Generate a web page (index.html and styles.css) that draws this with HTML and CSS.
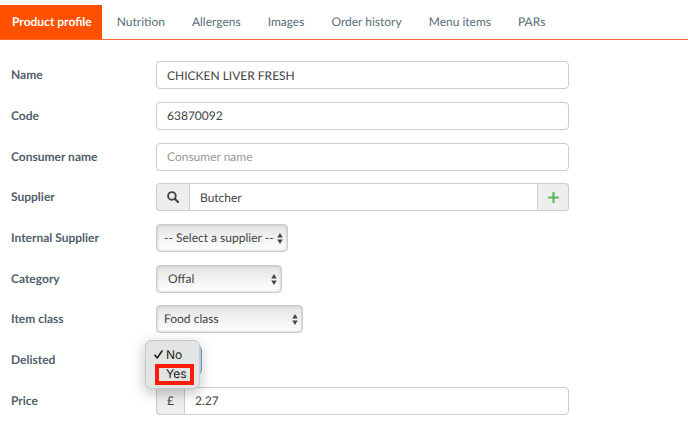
FILE: index.html
```html
<!DOCTYPE html>
<html lang="en">
<head>
<meta charset="utf-8">
<title>Product profile</title>
<link rel="stylesheet" href="styles.css">
</head>
<body>
<nav class="tabs">
  <a class="tab active" href="#profile">Product profile</a>
  <a class="tab" href="#nutrition">Nutrition</a>
  <a class="tab" href="#allergens">Allergens</a>
  <a class="tab" href="#images">Images</a>
  <a class="tab" href="#orders">Order history</a>
  <a class="tab" href="#menu">Menu items</a>
  <a class="tab" href="#pars">PARs</a>
</nav>
<form class="form">
  <div class="row">
    <label for="name">Name</label>
    <input class="control" id="name" type="text" value="CHICKEN LIVER FRESH">
  </div>
  <div class="row">
    <label for="code">Code</label>
    <input class="control" id="code" type="text" value="63870092">
  </div>
  <div class="row">
    <label for="consumer">Consumer name</label>
    <input class="control" id="consumer" type="text" placeholder="Consumer name">
  </div>
  <div class="row">
    <label for="supplier">Supplier</label>
    <div class="group">
      <span class="addon search">
        <svg width="12" height="12" viewBox="0 0 12 12" aria-hidden="true"><circle cx="4.9" cy="4.9" r="3.8" fill="none" stroke="#444" stroke-width="1.9"/><path d="M7.8 7.8 11 11" stroke="#444" stroke-width="2.2" stroke-linecap="round"/></svg>
      </span>
      <input class="control" id="supplier" type="text" value="Butcher">
      <button class="addon add" type="button" aria-label="Add supplier">
        <svg width="11" height="11" viewBox="0 0 11 11" aria-hidden="true"><path d="M5.5 1v9M1 5.5h9" stroke="#5cb85c" stroke-width="2.2" stroke-linecap="round"/></svg>
      </button>
    </div>
  </div>
  <div class="row">
    <label for="internal">Internal Supplier</label>
    <div class="picker internal">
      <select id="internal"><option>-- Select a supplier --</option></select>
      <svg class="arrows" viewBox="0 0 6 12" aria-hidden="true"><path d="M0 5 3 0l3 5zM0 7h6l-3 5z"/></svg>
    </div>
  </div>
  <div class="row">
    <label for="category">Category</label>
    <div class="picker category">
      <select id="category"><option>Offal</option></select>
      <svg class="arrows" viewBox="0 0 6 12" aria-hidden="true"><path d="M0 5 3 0l3 5zM0 7h6l-3 5z"/></svg>
    </div>
  </div>
  <div class="row">
    <label for="class">Item class</label>
    <div class="picker class">
      <select id="class"><option>Food class</option></select>
      <svg class="arrows" viewBox="0 0 6 12" aria-hidden="true"><path d="M0 5 3 0l3 5zM0 7h6l-3 5z"/></svg>
    </div>
  </div>
  <div class="row">
    <label for="delisted">Delisted</label>
    <div class="picker delisted">
      <select id="delisted"><option>No</option><option>Yes</option></select>
      <div class="menu" role="listbox" aria-label="Delisted">
        <div class="option" role="option" aria-selected="true">
          <svg width="9" height="9" viewBox="0 0 9 9" aria-hidden="true"><path d="M1 5.2 3.2 8 8 1" fill="none" stroke="#222" stroke-width="1.6" stroke-linecap="round" stroke-linejoin="round"/></svg>No
        </div>
        <div class="option marked" role="option" aria-selected="false">Yes</div>
      </div>
    </div>
  </div>
  <div class="row">
    <label for="price">Price</label>
    <div class="group">
      <span class="addon currency">£</span>
      <input class="control" id="price" type="text" value="2.27">
    </div>
  </div>
</form>
</body>
</html>
```
FILE: styles.css
```css
* {
  box-sizing: border-box;
}

body {
  display: flex;
  flex-direction: column;
  min-height: 100vh;
  margin: 0;
  padding: 5px 0 3px;
  background: #fff;
  color: #444;
  font: 12px/16px Lato, "Liberation Sans", sans-serif;
  text-rendering: geometricPrecision;
}

input,
select,
button {
  margin: 0;
  font: inherit;
  color: inherit;
  text-rendering: inherit;
}

.tabs {
  display: flex;
  gap: 3px;
  border-bottom: 1px solid #ff6a33;
}

.tab {
  padding: 9px 12px;
  color: #56707a;
  text-decoration: none;
}

.tab.active {
  padding-right: 10px;
  background: #ff5000;
  color: #fff;
  font-weight: 700;
}

.form {
  display: grid;
  flex: 1;
  grid-auto-rows: 1fr;
  padding-top: 15px;
}

.row {
  display: grid;
  grid-template-columns: 145px minmax(0, 413px);
  align-items: center;
  padding: 0 11px;
}

label {
  color: #51606b;
  font-weight: 700;
}

.control {
  width: 100%;
  min-width: 0;
  height: 28px;
  padding: 0 10px;
  border: 1px solid #ccc;
  border-radius: 4px;
  background: #fff;
}

.control::placeholder {
  color: #999;
  opacity: 1;
}

.group {
  display: flex;
}

.group .control {
  flex: 1;
  border-radius: 0;
}

.group .control:last-child {
  border-radius: 0 4px 4px 0;
}

.addon {
  display: flex;
  flex: none;
  align-items: center;
  justify-content: center;
  height: 28px;
  padding: 0;
  border: 1px solid #ccc;
  background: #eee;
}

.addon:first-child {
  border-right: 0;
  border-radius: 4px 0 0 4px;
}

.addon:last-child {
  border-left: 0;
  border-radius: 0 4px 4px 0;
}

.search {
  width: 33px;
}

.add {
  width: 31px;
}

.currency {
  width: 28px;
}

.picker {
  position: relative;
}

.picker select {
  display: block;
  width: 100%;
  height: 28px;
  padding: 0 7px;
  appearance: none;
  border: 1px solid #ccc;
  border-radius: 4px;
  background: linear-gradient(#e4e4e4, #fff);
  box-shadow: inset 0 0 3px #bbb;
}

.internal {
  width: 132px;
}

.category {
  width: 126px;
}

.picker.category select {
  padding-left: 11px;
}

.class {
  width: 147px;
}

.delisted {
  width: 46px;
}

.picker.delisted select {
  border-color: #66afe9;
}

.arrows {
  position: absolute;
  top: 9px;
  right: 5px;
  width: 6px;
  height: 11px;
  fill: #444;
  pointer-events: none;
}

.menu {
  position: absolute;
  z-index: 1;
  top: -6px;
  left: -11px;
  width: 55px;
  padding: 5px 4px 3px;
  border: 1px solid #c8caca;
  border-radius: 6px;
  background: #e3e5e4;
  box-shadow: 0 4px 14px rgba(0, 0, 0, 0.25);
  color: #222;
  font: 12px/18px Inter, "Liberation Sans", sans-serif;
}

.option {
  display: flex;
  align-items: center;
  gap: 3px;
  height: 18px;
  padding-left: 4px;
}

.marked {
  width: 39px;
  height: 21px;
  margin-left: 5px;
  padding-left: 7px;
  border: 4px solid #fb1b0b;
}
```
